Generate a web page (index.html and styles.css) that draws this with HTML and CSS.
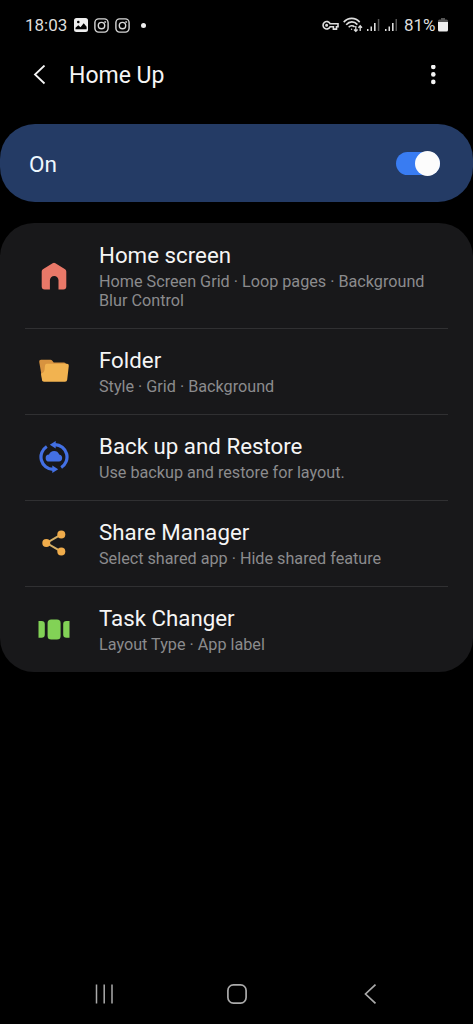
FILE: index.html
```html
<!DOCTYPE html>
<html lang="en">
<head>
<meta charset="utf-8">
<title>Home Up</title>
<link rel="stylesheet" href="styles.css">
</head>
<body>
<div class="screen">
  <div class="status">
    <div class="status-left">
      <span class="time">18:03</span>
      <svg class="ic-photo" width="14" height="14" viewBox="0 0 14 14"><rect width="14" height="14" rx="2.5" fill="#eee"/><circle cx="4.3" cy="4" r="1.3" fill="#000"/><path d="M1.5 11.2V9.8L4.3 7.2l2.2 2 3.2-4 2.9 3.6v2.4z" fill="#000"/></svg>
      <svg class="ic-insta" width="15" height="15" viewBox="0 0 15 15" fill="none" stroke="#d8d8d8" stroke-width="1.4"><rect x=".9" y=".9" width="13.2" height="13.2" rx="3.8"/><circle cx="7.5" cy="7.6" r="3.2"/><circle cx="11.2" cy="3.9" r=".3"/></svg>
      <svg class="ic-insta" width="15" height="15" viewBox="0 0 15 15" fill="none" stroke="#d8d8d8" stroke-width="1.4"><rect x=".9" y=".9" width="13.2" height="13.2" rx="3.8"/><circle cx="7.5" cy="7.6" r="3.2"/><circle cx="11.2" cy="3.9" r=".3"/></svg>
      <span class="dot"></span>
    </div>
    <div class="status-right">
      <svg width="18" height="12" viewBox="0 0 18 12" fill="none" stroke="#ddd" stroke-width="1.6"><path d="M9.100 4.700H17V7.800H15.500V10.100H12.400V7.800H9.100A3.700 3.700 0 1 1 9.100 4.700Z"/><circle cx="5.600" cy="6.300" r=".7"/></svg>
      <svg class="ic-wifi" width="20" height="16" viewBox="0 0 20 16" fill="none" stroke="#ddd" stroke-width="1.6"><path d="M.7 5.1C5.3.1 12.3.1 16.7 5.1"/><path d="M3.2 7.7c3.3-3.7 8-3.7 11.2-.1"/><path d="M5.7 10.2c1.7-1.9 4.2-1.9 5.900-.3"/><circle cx="8.600" cy="12.200" r=".7" fill="#ddd" stroke="none"/><path stroke-width="1.300" d="M12.800 9v5.400M11 12.500l1.800 1.900 1.800-1.900M17.200 14V8.800M15.400 10.700l1.800-1.900 1.800 1.900"/></svg>
      <svg class="ic-signal" width="13" height="14" viewBox="0 0 13 14"><path fill="#ddd" d="M0 11h1.500v2H0zM3.500 8.500H5V13H3.500zM7 5h1.600v8H7z"/><path fill="#555" d="M10.800 1h1.500v12h-1.500z"/></svg>
      <svg class="ic-signal2" width="13" height="14" viewBox="0 0 13 14"><path fill="#ddd" d="M0 11h1.500v2H0zM3.500 8.500H5V13H3.500zM7 5h1.600v8H7z"/><path fill="#555" d="M10.500 1h1.500v12h-1.500z"/></svg>
      <span class="percent">81%</span>
      <svg width="10" height="14" viewBox="0 0 10 14"><path fill="#555" d="M3 0h4v1.500h1.500q1.500 0 1.500 1.500v2H0V3q0-1.500 1.500-1.500H3z"/><path fill="#eee" d="M0 4h10v8q0 1.500-1.500 1.500h-7Q0 13.500 0 12z"/></svg>
    </div>
  </div>

  <header class="header">
    <svg width="13" height="20" viewBox="0 0 13 20" fill="none" stroke="#f5f5f5" stroke-width="1.8"><path d="M11.500.5L2 9.500l9.500 9"/></svg>
    <h1 class="title">Home Up</h1>
    <svg class="more" width="6" height="20" viewBox="0 0 6 20" fill="#f5f5f5"><circle cx="3.300" cy="1.900" r="2.300"/><circle cx="3.300" cy="9.400" r="2.300"/><circle cx="3.300" cy="16.900" r="2.300"/></svg>
  </header>

  <section class="master">
    <span class="label">On</span>
    <span class="switch"><span class="thumb"></span></span>
  </section>

  <main class="list">
    <article class="row">
      <div class="icon"><svg width="32" height="32" viewBox="0 0 32 32"><path fill="#e97868" d="M14.600 3.200q1.400-.9 2.800 0l9.700 6q1.200.8 1.200 2.200V26.500q0 3-3 3h-4.800V20.300a4.300 4.300 0 0 0-8.600 0v9.200H6.700q-3 0-3-3V11.400q0-1.400 1.200-2.200z"/></svg></div>
      <div class="text"><h2 class="name">Home screen</h2><p class="desc">Home Screen Grid · Loop pages · Background Blur Control</p></div>
    </article>
    <article class="row">
      <div class="icon"><svg width="32" height="24" viewBox="0 0 32 24"><path fill="#d8933f" d="M1.200 2.800Q1 .8 3 .8h9.500q1 0 1.600.8l1.600 2H26q2 0 2 2V12L4.500 22z"/><path fill="#f2b350" d="M8.800 4.700H29q2 0 1.800 2l-1.600 14q-.2 2-2.200 2H6q-1.800 0-2-1.800L3 14.500q3.200-.7 3.600-4l.4-4q.2-1.800 1.800-1.800z"/></svg></div>
      <div class="text"><h2 class="name">Folder</h2><p class="desc">Style · Grid · Background</p></div>
    </article>
    <article class="row">
      <div class="icon"><svg width="30" height="32" viewBox="0 0 30 32"><g fill="none" stroke="#4370e4" stroke-width="3.200"><path d="M7.800 5.500A12.400 12.400 0 0 0 14 28.400"/><path d="M16 3.600A12.400 12.400 0 0 1 22.200 26.500"/></g><path fill="#4370e4" d="M16.700 0v7.400L10.800 3.700zM13.300 24.600V32l5.900-3.700zM10.300 20.600a3.500 3.500 0 0 1-.3-7 5.500 5.500 0 0 1 10.200-.2 3.650 3.650 0 0 1-.2 7.200z"/></svg></div>
      <div class="text"><h2 class="name">Back up and Restore</h2><p class="desc">Use backup and restore for layout.</p></div>
    </article>
    <article class="row">
      <div class="icon"><svg width="24" height="26" viewBox="0 0 24 26"><path d="M19.300 4.300L4.700 13l14.600 8.700" fill="none" stroke="#d6b067" stroke-width="2"/><g fill="#f0ac4b"><circle cx="19.300" cy="4.400" r="4"/><circle cx="4.300" cy="13" r="4"/><circle cx="19.300" cy="21.600" r="4"/></g></svg></div>
      <div class="text"><h2 class="name">Share Manager</h2><p class="desc">Select shared app · Hide shared feature</p></div>
    </article>
    <article class="row">
      <div class="icon"><svg width="32" height="22" viewBox="0 0 32 22" fill="#82d256"><path d="M.5 2h3Q6.800 2 6.800 5.300v10.200q0 3.300-3.300 3.300h-3zM31.500 2h-3q-3.300 0-3.300 3.300v10.200q0 3.300 3.300 3.300h3z"/><rect x="9.600" y=".4" width="13" height="20.200" rx="3.600"/></svg></div>
      <div class="text"><h2 class="name">Task Changer</h2><p class="desc">Layout Type · App label</p></div>
    </article>
  </main>

  <nav class="nav">
    <svg width="20" height="20" viewBox="0 0 20 20" fill="none" stroke="#aaa" stroke-width="1.500"><path d="M2.500.5v19M10.200.5v19M18 .5v19"/></svg>
    <svg width="20" height="20" viewBox="0 0 20 20" fill="none" stroke="#aaa" stroke-width="1.700"><rect x=".9" y=".9" width="18.200" height="18.200" rx="5.500"/></svg>
    <svg width="20" height="20" viewBox="0 0 20 20" fill="none" stroke="#aaa" stroke-width="1.700"><path d="M15.500.6L5.500 10l10 9.400"/></svg>
  </nav>
</div>
</body>
</html>
```

FILE: styles.css
```css
* { box-sizing: border-box; }
body { margin: 0; background: #000; color: #f5f5f5; font-family: Roboto, "Liberation Sans", sans-serif; }
svg { display: block; flex: none; }
h1, h2, p { margin: 0; font-weight: 400; }
.screen { width: 473px; height: 1024px; display: flex; flex-direction: column; background: #000; }

.status { height: 50px; padding: 0 25px; display: flex; justify-content: space-between; align-items: center; color: #ddd; }
.status-left, .status-right { display: flex; align-items: center; }
.time { width: 49px; font-size: 17px; line-height: 20px; }
.ic-photo { margin-right: 6px; }
.ic-insta { margin-right: 6px; }
.dot { width: 5px; height: 5px; margin-left: 5px; border-radius: 50%; background: #eee; }
.ic-wifi { margin-left: 4px; }
.ic-signal { margin-left: 4px; }
.ic-signal2 { margin-left: 5px; }
.percent { width: 34px; margin-left: 6px; font-size: 17px; line-height: 20px; white-space: nowrap; }

.header { height: 50px; padding: 0 37px 0 33px; display: flex; align-items: center; }
.title { margin-left: 23px; padding-top: 2px; font-size: 23px; line-height: 28px; }
.more { margin-left: auto; }

.master { height: 78px; margin-top: 24px; padding: 0 33px 0 29px; display: flex; flex: none; align-items: center; justify-content: space-between; border-radius: 35px; background: #243b65; }
.label { padding-top: 2px; font-size: 22.500px; line-height: 26px; color: #eef8ff; }
.switch { width: 44.500px; height: 23px; display: flex; align-items: center; justify-content: flex-end; border-radius: 12px; background: #397cf2; }
.thumb { width: 25px; height: 25px; border-radius: 50%; background: #fcfcfc; }

.list { margin-top: 20.500px; padding: 1px 25px 0; border-radius: 34px; background: #18181a; }
.row { height: 86.200px; padding: 18px 0 0; display: flex; border-bottom: 1.500px solid #303032; }
.row:first-child { height: 105px; }
.row:last-child { height: 85px; border-bottom: 0; }
.icon { width: 58px; margin-right: 16px; padding-bottom: 18px; display: flex; align-items: center; justify-content: center; }
.text { flex: 1; }
.name { margin-bottom: 4px; font-size: 22.300px; line-height: 26px; white-space: nowrap; }
.desc { margin-right: -4px; font-size: 16.200px; line-height: 19px; color: #8b8b8d; }

.nav { height: 60px; margin-top: auto; padding: 0 93px 0 94px; display: flex; align-items: center; justify-content: space-between; }
```
